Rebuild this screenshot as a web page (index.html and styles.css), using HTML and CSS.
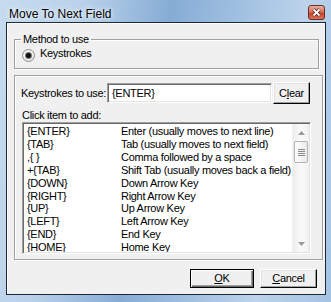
FILE: index.html
```html
<!DOCTYPE html>
<html>
<head>
<meta charset="utf-8">
<link rel="stylesheet" href="styles.css">
<title>Move To Next Field</title>
</head>
<body>
<div class="window">
    <div class="titlebar">
        <span class="title">Move To Next Field</span>
        <span class="close-btn">
            <svg width="17" height="15" viewBox="0 0 17 15">
                <defs>
                    <linearGradient id="redg" x1="0" y1="0" x2="0" y2="1">
                        <stop offset="0" stop-color="#eab3a6"/>
                        <stop offset="0.45" stop-color="#d9745f"/>
                        <stop offset="0.55" stop-color="#c7462d"/>
                        <stop offset="1" stop-color="#d8765c"/>
                    </linearGradient>
                </defs>
                <rect x="0.5" y="0.5" width="16" height="14" rx="2.5" fill="url(#redg)" stroke="#6b3128"/>
                <path d="M5.5 4.5 L11.5 10.5 M11.5 4.5 L5.5 10.5" stroke="#4a1c14" stroke-width="3.2"/>
                <path d="M5.5 4.5 L11.5 10.5 M11.5 4.5 L5.5 10.5" stroke="#fff" stroke-width="1.8"/>
            </svg>
        </span>
    </div>
    <div class="client">
        <fieldset class="group group-method">
            <legend>Method to use</legend>
            <div class="radio-row">
                <span class="radio"><span class="radio-dot"></span></span>
                <span>Keystrokes</span>
            </div>
        </fieldset>
        <fieldset class="group group-keys">
            <div class="keys-row">
                <span class="keys-label">Keystrokes to use:</span>
                <div class="textbox">{ENTER}</div>
                <button class="btn btn-clear" type="button">C<u>l</u>ear</button>
            </div>
            <div class="list-label">Click item to add:</div>
            <div class="listbox">
                <div class="list-items">
                    <div class="item"><span class="key">{ENTER}</span><span class="desc">Enter (usually moves to next line)</span></div>
                    <div class="item"><span class="key">{TAB}</span><span class="desc">Tab (usually moves to next field)</span></div>
                    <div class="item"><span class="key">,{ }</span><span class="desc">Comma followed by a space</span></div>
                    <div class="item"><span class="key">+{TAB}</span><span class="desc">Shift Tab (usually moves back a field)</span></div>
                    <div class="item"><span class="key">{DOWN}</span><span class="desc">Down Arrow Key</span></div>
                    <div class="item"><span class="key">{RIGHT}</span><span class="desc">Right Arrow Key</span></div>
                    <div class="item"><span class="key">{UP}</span><span class="desc">Up Arrow Key</span></div>
                    <div class="item"><span class="key">{LEFT}</span><span class="desc">Left Arrow Key</span></div>
                    <div class="item"><span class="key">{END}</span><span class="desc">End Key</span></div>
                    <div class="item"><span class="key">{HOME}</span><span class="desc">Home Key</span></div>
                </div>
                <div class="scrollbar">
                    <div class="sb-arrow">
                        <svg width="7" height="4" viewBox="0 0 7 4"><path d="M0 4 L3.5 0 L7 4 Z" fill="#9a9a9a"/></svg>
                    </div>
                    <div class="sb-thumb">
                        <span></span><span></span><span></span><span></span>
                    </div>
                    <div class="sb-track"></div>
                    <div class="sb-arrow">
                        <svg width="7" height="4" viewBox="0 0 7 4"><path d="M0 0 L7 0 L3.5 4 Z" fill="#9a9a9a"/></svg>
                    </div>
                </div>
            </div>
        </fieldset>
        <div class="buttons">
            <button class="btn btn-ok" type="button"><u>O</u>K</button>
            <button class="btn btn-cancel" type="button"><u>C</u>ancel</button>
        </div>
    </div>
</div>
</body>
</html>
```

FILE: styles.css
```css
* {
    box-sizing: border-box;
}
body {
    margin: 0;
    font-family: "Liberation Sans", Arial, sans-serif;
    font-size: 11px;
    letter-spacing: -0.3px;
    color: #000;
}
.window {
    width: 331px;
    height: 302px;
    background: linear-gradient(100deg, #c6dbef 0%, #b9d1ea 22%, #86acd4 45%, #9fbfe0 62%, #bcd3eb 80%, #a4c3e3 100%);
}
.titlebar {
    height: 22px;
    display: flex;
    align-items: flex-start;
    padding-left: 9px;
}
.title {
    font-size: 12px;
    letter-spacing: 0;
    line-height: 16px;
    padding-top: 6px;
    color: #000;
    text-shadow: 0 0 6px #fff, 0 0 3px #e8f1fa;
}
.close-btn {
    margin-left: auto;
    margin-top: 5px;
    margin-right: 6px;
    height: 15px;
}
.close-btn svg {
    display: block;
}
.client {
    margin: 0 5px 0 6px;
    height: 273px;
    background: #f0f0f0;
    border: 1px solid #1c2836;
    box-shadow: inset 1px 1px 0 #fff;
}
.group {
    margin: 0;
    border: 1px solid #a0a0a0;
    box-shadow: inset 1px 1px 0 #fff, 1px 1px 0 #fff;
    min-width: 0;
}
.group-method {
    margin: 10px 0 0 7px;
    width: 305px;
    padding: 0 0 8px 6px;
}
.group-method legend {
    padding: 0 2px;
    line-height: 12px;
}
.radio-row {
    display: flex;
    align-items: flex-start;
    height: 13px;
    line-height: 13px;
    margin-top: 2px;
}
.radio {
    width: 13px;
    height: 13px;
    margin: 2px 5px 0 1px;
    border-radius: 50%;
    border: 1px solid #8e8f8f;
    background: radial-gradient(circle at 40% 35%, #fff 0, #f0f0f0 50%, #d6d6d6 100%);
    display: flex;
    align-items: center;
    justify-content: center;
}
.radio-dot {
    width: 5px;
    height: 5px;
    border-radius: 50%;
    background: #111;
    box-shadow: 0 0 0 1px #777;
}
.group-keys {
    margin: 6px 0 0 7px;
    width: 309px;
    padding: 6px 0 5px 7px;
}
.keys-row {
    display: flex;
    align-items: center;
    height: 22px;
}
.keys-label {
    width: 86px;
    margin-left: -1px;
    line-height: 13px;
}
.textbox {
    width: 165px;
    height: 20px;
    background: #fff;
    border: 1px solid;
    border-color: #a0a0a0 #fff #fff #a0a0a0;
    box-shadow: inset 1px 1px 0 #696969, inset -1px -1px 0 #e3e3e3;
    padding: 3px 0 0 4px;
    line-height: 13px;
}
.btn {
    font-family: inherit;
    font-size: 11px;
    letter-spacing: -0.3px;
    color: #000;
    background: #f0f0f0;
    border: 1px solid;
    border-color: #fff #000 #000 #fff;
    box-shadow: inset -1px -1px 0 #a0a0a0, inset 1px 1px 0 #e3e3e3;
    padding: 0;
    line-height: 13px;
}
.btn-clear {
    width: 37px;
    height: 22px;
    margin-left: 1px;
}
.list-label {
    margin-top: 5px;
    line-height: 13px;
}
.listbox {
    display: flex;
    width: 289px;
    height: 132px;
    background: #fff;
    border: 1px solid;
    border-color: #a0a0a0 #fff #fff #a0a0a0;
    box-shadow: inset 1px 1px 0 #696969, inset -1px -1px 0 #e3e3e3;
    padding: 1px;
}
.list-items {
    flex: 1;
    overflow: hidden;
    padding: 1px 0 0 3px;
}
.item {
    display: flex;
    white-space: nowrap;
    line-height: 12.9px;
}
.key {
    width: 94px;
    flex: none;
}
.scrollbar {
    width: 17px;
    display: flex;
    flex-direction: column;
    background: linear-gradient(to right, #ececec, #f8f8f8 40%, #f8f8f8 70%, #efefef);
    border-left: 1px solid #f0f0f0;
}
.sb-arrow {
    height: 17px;
    display: flex;
    align-items: center;
    justify-content: center;
}
.sb-arrow svg {
    display: block;
}
.sb-thumb {
    height: 22px;
    margin: 0 1px;
    border: 1px solid #b4b4b4;
    border-radius: 2px;
    background: linear-gradient(to right, #fdfdfd, #ececec);
    display: flex;
    flex-direction: column;
    align-items: center;
    justify-content: center;
    gap: 1px;
}
.sb-thumb span {
    display: block;
    width: 7px;
    height: 1px;
    background: #8a8a8a;
}
.sb-track {
    flex: 1;
}
.buttons {
    display: flex;
    justify-content: flex-end;
    gap: 6px;
    margin: 9px 8px 0 0;
}
.btn-ok {
    width: 64px;
    height: 19px;
    border-color: #000;
    box-shadow: inset 1px 1px 0 #fff, inset -1px -1px 0 #696969, inset -2px -2px 0 #a0a0a0;
}
.btn-cancel {
    width: 57px;
    height: 19px;
}
```
